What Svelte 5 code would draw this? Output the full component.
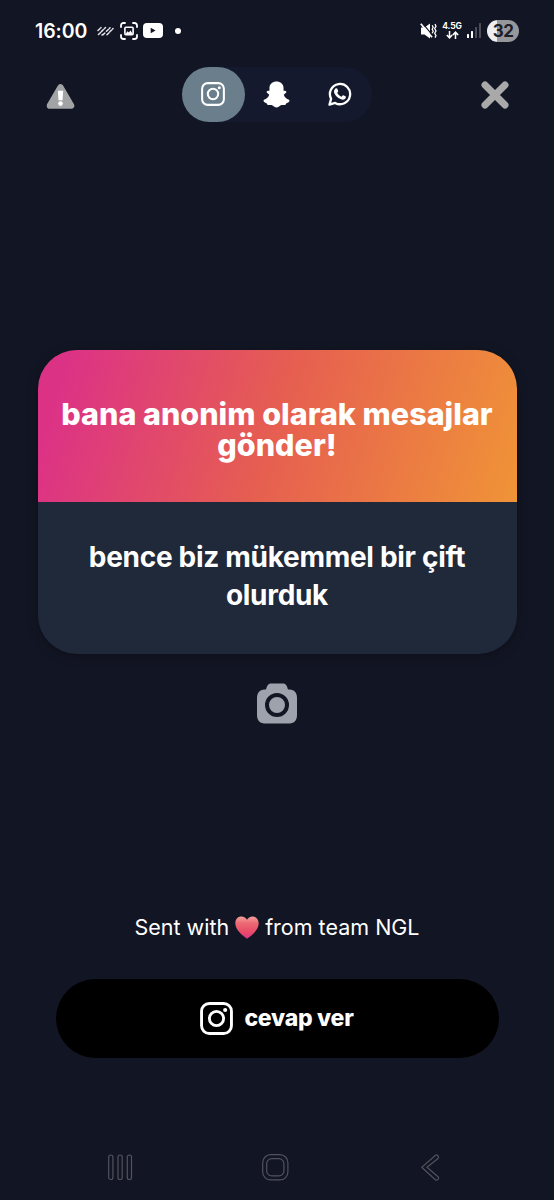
<script>
    const prompt = 'bana anonim olarak mesajlar gönder!';
    const message = 'bence biz mükemmel bir çift olurduk';
    const targets = ['instagram', 'snapchat', 'whatsapp'];

    let selected = $state('instagram');
</script>

{#snippet instagram(stroke, size)}
    <svg width={size} height={size} viewBox="0 0 32 32" fill="none" stroke="#fff" stroke-width={stroke}>
        <rect x="1.5" y="1.5" width="29" height="29" rx="7.5" />
        <circle cx="16" cy="16" r="6.9" />
        <circle cx="24.4" cy="7.7" r="2" fill="#fff" stroke="none" />
    </svg>
{/snippet}

<div class="screen">
    <div class="status">
        <div class="status-left">
            <span class="clock">16:00</span>
            <svg class="hatch" width="17" height="10" viewBox="0 0 17 10" stroke="#e4e5ea" stroke-width="1.5" stroke-linecap="round">
                <path d="M1 4.5 4 1.5M1.5 8.5 8.5 1.5M6 8.8 8 6.8M9.5 5.3 13 1.8M10 8.8 16 2.5M5 9 5.5 8.5" stroke-dasharray="2.6 1.5" />
            </svg>
            <svg class="capture" width="18" height="18" viewBox="0 0 18 18" fill="none" stroke="#fff" stroke-width="1.8" stroke-linecap="round">
                <path d="M1 5V3.5A2.5 2.5 0 0 1 3.5 1H5M13 1h1.5A2.5 2.5 0 0 1 17 3.5V5M17 13v1.5a2.5 2.5 0 0 1-2.5 2.5H13M5 17H3.5A2.5 2.5 0 0 1 1 14.5V13" />
                <rect x="4.9" y="5.2" width="8.2" height="7.6" rx="1" stroke-width="1.6" />
                <path d="m5.5 12 2-2.8 1.3 1.3 1.7-2 2.3 3.5z" fill="#fff" stroke="none" />
            </svg>
            <svg class="video" width="20" height="15" viewBox="0 0 20 15">
                <rect width="20" height="15" rx="4" fill="#fff" />
                <path d="M7.7 4.8v5.4l4.9-2.7z" fill="#121523" />
            </svg>
            <span class="dot"></span>
        </div>
        <div class="status-right">
            <svg width="17" height="18" viewBox="0 0 17 18" fill="none" stroke="#fff">
                <path d="M1 5.5h3.5L10 1.5v15L4.5 12.5H1z" fill="#fff" stroke="none" />
                <path d="M2.2.8 13 13.8" stroke="#121523" stroke-width="1.2" />
                <path d="M.8 1.8 12 15.3" stroke-width="1.8" />
                <path d="M12.2 3.2l1 2-1 2 1 2-1 2M15 2l1 2.300-1.300 2.300L16 9l-1.300 2.300L16 13.600l-1 2" stroke-width="1.3" />
            </svg>
            <div class="network">
                <span>4.5G</span>
                <svg width="13" height="8" viewBox="0 0 13 8" fill="none" stroke="#fff" stroke-width="1.5">
                    <path d="M3.5 0v6.5M.8 4 3.5 6.8 6.2 4M9.5 8V1.5M6.8 4 9.5 1.2 12.2 4" />
                </svg>
            </div>
            <svg class="signal" width="15" height="15" viewBox="0 0 15 15">
                <rect y="11" width="2" height="4" rx=".5" fill="#fff" />
                <rect x="4" y="8" width="2" height="7" rx=".5" fill="#fff" />
                <rect x="8" y="4" width="2" height="11" rx=".5" fill="#4b4d59" />
                <rect x="12" width="2" height="15" rx=".5" fill="#4b4d59" />
            </svg>
            <div class="battery">32</div>
        </div>
    </div>

    <div class="toolbar">
        <svg class="warning" width="29" height="27" viewBox="0 0 30 27">
            <path d="M15 4 26 23H4z" fill="#a2a3a5" stroke="#a2a3a5" stroke-width="6.5" stroke-linejoin="round" />
            <path d="M12.3 7.5h5.4l-.6 9.8h-4.2z" fill="#fff" />
            <circle cx="15" cy="20.8" r="2.4" fill="#fff" />
        </svg>

        <div class="targets">
            {#each targets as target}
                <button class="target" class:active={selected === target} aria-label={target} onclick={() => (selected = target)}>
                    {#if target === 'instagram'}
                        {@render instagram(2.7, 24)}
                    {:else if target === 'snapchat'}
                        <svg width="27" height="27" viewBox="0 0 28 28" fill="#fff">
                            <path d="M14 .5C18 .5 21.3 3.2 21.3 7.2V10.2C22.2 10.3 23.6 9.8 24.2 11.2 24.5 12.5 22.6 13.2 21.6 14 21.8 16.500 24.500 18.700 27 19.500 28.300 20.800 26.500 22.400 24.300 23 23.800 23.500 23.600 24.500 22.900 25 21.500 25.100 19.900 24.500 18.500 25.200 16.800 26.200 15.800 27.600 14 27.600 12.200 27.600 11.200 26.200 9.500 25.200 8.100 24.500 6.500 25.100 5.100 25 4.400 24.500 4.200 23.500 3.700 23 1.500 22.400-.3 20.800 1 19.500 3.500 18.700 6.200 16.500 6.400 14 5.400 13.200 3.500 12.500 3.800 11.200 4.400 9.800 5.800 10.300 6.700 10.200V7.200C6.700 3.200 10 .5 14 .5Z" />
                        </svg>
                    {:else}
                        <svg width="24" height="24" viewBox="0 0 24 24">
                            <path d="M1.5 22.6 3.1 16.8A10.1 10.1 0 1 1 7.1 20.9Z" fill="none" stroke="#fff" stroke-width="2.3" stroke-linejoin="round" />
                            <path d="M7.3 6.8C8 6 9.1 6.2 9.4 6.9L10.2 8.9C10.4 9.5 9.5 10.3 9.2 10.7 10 12.4 11.5 13.8 13.5 14.7 14 14.3 14.7 13 15.3 13.2L17.5 14.3C18.2 14.7 17.9 16 17.2 16.7 15.9 17.9 14.3 17.9 12.5 17.1 9.6 16 7.7 13.9 6.5 11.6 5.6 9.8 5.9 8.1 7.3 6.8Z" fill="#fff" />
                        </svg>
                    {/if}
                </button>
            {/each}
        </div>

        <svg class="close" width="30" height="30" viewBox="0 0 30 30" stroke="#a9a9a9" stroke-width="7" stroke-linecap="round">
            <path d="M5 5 25 25M25 5 5 25" />
        </svg>
    </div>

    <div class="card">
        <div class="prompt">{prompt}</div>
        <div class="message">{message}</div>
    </div>

    <svg class="camera" width="40" height="41" viewBox="0 0 40 41">
        <path d="M9 6.5C10 3 11 .5 14 .5H26C29 .5 30 3 31 6.5C37 6.5 40 9 40 15V32C40 38 37 40.5 31 40.5H9C3 40.5 0 38 0 32V15C0 9 3 6.5 9 6.5Z" fill="#9ea2ac" />
        <circle cx="20" cy="22" r="10" fill="none" stroke="#121523" stroke-width="4" />
    </svg>

    <div class="credit">
        <span>Sent with</span>
        <svg width="24" height="23" viewBox="0 0 24 23">
            <defs>
                <linearGradient id="heart" x1="0" y1="0" x2="0" y2="1">
                    <stop offset="0" stop-color="#f3a09b" />
                    <stop offset=".3" stop-color="#ec6a73" />
                    <stop offset=".7" stop-color="#e84b69" />
                    <stop offset="1" stop-color="#d9368a" />
                </linearGradient>
            </defs>
            <path d="M12 22.8C8 19.8.3 14.5.3 7.3.3 3 3 .5 6.3.5 9 .5 11 1.8 12 3.8 13 1.8 15 .5 17.7.5 21 .5 23.7 3 23.7 7.3 23.7 14.5 16 19.8 12 22.8Z" fill="url(#heart)" />
        </svg>
        <span>from team NGL</span>
    </div>

    <button class="reply">
        {@render instagram(2.8, 33)}
        <span>cevap ver</span>
    </button>

    <div class="nav">
        <svg width="25" height="27" viewBox="0 0 25 27">
            <rect x=".7" y="1" width="4.2" height="24.5" rx="2.1" />
            <rect x="10" y="1" width="4.2" height="24.5" rx="2.1" />
            <rect x="19.3" y="1" width="4.2" height="24.5" rx="2.1" />
        </svg>
        <svg class="home" width="27" height="27" viewBox="0 0 27 27">
            <rect x=".7" y=".7" width="25.2" height="25.2" rx="8" />
            <rect x="4.7" y="4.7" width="17.2" height="17.2" rx="5" />
        </svg>
        <svg width="19" height="27" viewBox="0 0 19 27">
            <path d="M14.5 1.2.8 13.3 14.5 26Q16.5 26.5 17.5 24.8 17.8 23.5 17 22.7L6 13.3 17 4.500Q18 3.200 17 1.800 15.800.5 14.500 1.200Z" />
        </svg>
    </div>
</div>

<style>
    :global(body) {
        margin: 0;
        background: #121523;
    }
    .screen {
        box-sizing: border-box;
        width: 554px;
        height: 1200px;
        display: flex;
        flex-direction: column;
        align-items: center;
        overflow: hidden;
        background: #121523;
        color: #fff;
        font-family: Inter, 'Liberation Sans', sans-serif;
    }
    svg {
        display: block;
        flex: none;
    }
    button {
        border: 0;
        padding: 0;
        font: inherit;
        color: inherit;
        background: none;
    }
    .status {
        box-sizing: border-box;
        width: 100%;
        height: 61px;
        padding: 0 35px;
        display: flex;
        align-items: center;
        justify-content: space-between;
    }
    .status-left,
    .status-right {
        display: flex;
        align-items: center;
    }
    .clock {
        width: 62px;
        font-size: 19.5px;
        font-weight: 600;
        letter-spacing: -0.1px;
    }
    .capture {
        margin-left: 6px;
    }
    .video {
        margin-left: 5px;
    }
    .dot {
        width: 6px;
        height: 6px;
        margin-left: 12px;
        border-radius: 50%;
        background: #fff;
    }
    .network {
        display: flex;
        flex-direction: column;
        align-items: center;
        width: 20px;
        margin-left: 5px;
        margin-right: 1px;
        font-size: 8.5px;
        line-height: 9px;
        font-weight: 700;
        letter-spacing: -0.2px;
    }
    .signal {
        margin-left: 4px;
    }
    .battery {
        width: 32px;
        height: 22px;
        margin-left: 5px;
        border-radius: 11px;
        background: linear-gradient(to right, #eeeef0 32%, #96979b 32%);
        color: #1b1d27;
        font-size: 17px;
        line-height: 22px;
        font-weight: 700;
        letter-spacing: -0.5px;
        text-align: center;
    }
    .toolbar {
        box-sizing: border-box;
        width: 100%;
        margin-top: 6px;
        padding: 0 44.5px 0 45.5px;
        display: flex;
        align-items: center;
        justify-content: space-between;
    }
    .warning {
        margin-top: 3px;
    }
    .targets {
        display: flex;
        width: 190px;
        height: 55px;
        border-radius: 28px;
        background: #14192e;
    }
    .target {
        box-sizing: border-box;
        flex: 1;
        display: flex;
        align-items: center;
        justify-content: center;
        padding: 0 1px 1px 0;
        border-radius: 28px;
    }
    .target.active {
        background: #6a7f8b;
    }
    .card {
        width: 479px;
        height: 304px;
        margin-top: 228px;
        border-radius: 39px;
        overflow: hidden;
        text-align: center;
        background: #20293a;
        box-shadow: 0 2px 12px rgba(0, 0, 0, 0.25);
    }
    .prompt,
    .message {
        box-sizing: border-box;
        height: 152px;
    }
    .prompt {
        padding: 48px 10px 0;
        background: linear-gradient(107deg, #dc3286 6%, #e65f50 50%, #f09437 100%);
        font-size: 30.5px;
        line-height: 31px;
        font-weight: 800;
        letter-spacing: 0;
    }
    .message {
        padding: 36px 40px 0;
        font-size: 28px;
        line-height: 38px;
        font-weight: 650;
        letter-spacing: -0.3px;
    }
    .camera {
        margin-top: 29px;
    }
    .credit {
        display: flex;
        align-items: center;
        gap: 6px;
        height: 30px;
        margin-top: 188px;
        font-size: 21.5px;
        line-height: 30px;
    }
    .reply {
        display: flex;
        align-items: center;
        justify-content: center;
        gap: 11px;
        width: 443px;
        height: 79px;
        margin-top: 37px;
        border-radius: 40px;
        background: #000;
        font-size: 23px;
        font-weight: 800;
        letter-spacing: -0.25px;
    }
    .reply span {
        margin-top: -2px;
    }
    .nav {
        box-sizing: border-box;
        width: 100%;
        margin-top: 96px;
        padding: 0 114px 0 108px;
        display: flex;
        justify-content: space-between;
        fill: none;
        stroke: #50525d;
        stroke-width: 1.2;
    }
    .home {
        margin-right: 4px;
    }
</style>
